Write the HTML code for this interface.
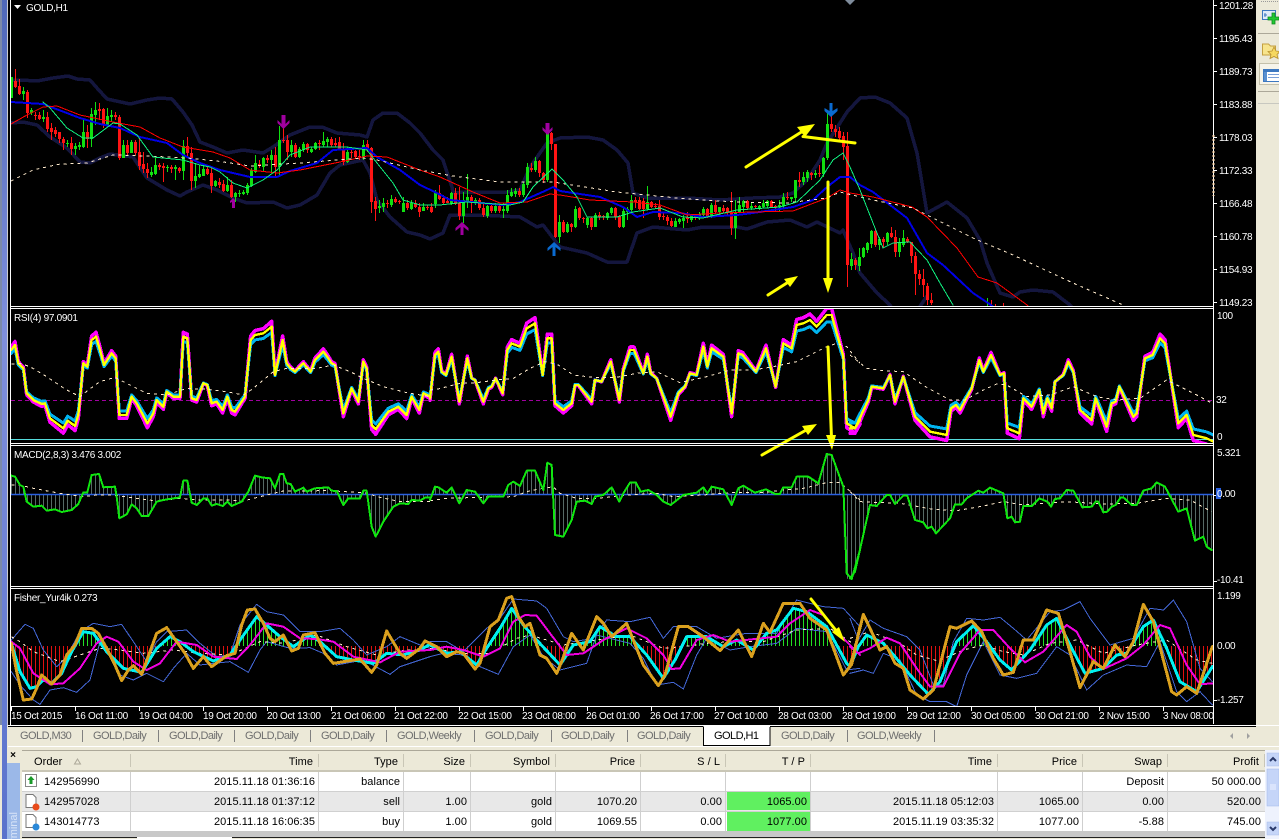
<!DOCTYPE html>
<html><head><meta charset="utf-8"><title>GOLD,H1</title>
<style>
html,body{margin:0;padding:0;background:#ece9d8;width:1279px;height:839px;overflow:hidden}
svg{position:absolute;left:0;top:0;display:block}
.n{vector-effect:non-scaling-stroke;fill:none;stroke-linejoin:round;stroke-linecap:round;shape-rendering:crispEdges}
.c{font-family:"Liberation Sans",sans-serif;font-size:10px;fill:#fff;letter-spacing:-.3px}
.t{font-family:"Liberation Sans",sans-serif;font-size:11px;fill:#000;letter-spacing:.05px}
.g{font-family:"Liberation Sans",sans-serif;font-size:11px;fill:#6e6e6e;letter-spacing:-.55px}
.e{text-anchor:end}
</style></head><body>
<svg width="1279" height="839" viewBox="0 0 1279 839" xmlns="http://www.w3.org/2000/svg">
<defs>
<linearGradient id="ls" x1="0" y1="0" x2="0" y2="1"><stop offset="0" stop-color="#4f68b8"/><stop offset=".4" stop-color="#7f8fdc"/><stop offset="1" stop-color="#5a72cc"/></linearGradient>
<clipPath id="cm"><rect x="11" y="0" width="1202" height="306"/></clipPath>
<clipPath id="cr"><rect x="11" y="309" width="1202" height="134"/></clipPath>
<clipPath id="cd"><rect x="11" y="446" width="1202" height="140"/></clipPath>
<clipPath id="cf"><rect x="11" y="589" width="1202" height="117"/></clipPath>
<clipPath id="cfu"><rect x="11" y="589" width="1202" height="57"/></clipPath>
<clipPath id="cfl"><rect x="11" y="646" width="1202" height="60"/></clipPath>
<pattern id="h0" patternUnits="userSpaceOnUse" width="12" height="1000"><rect x="9" width="3" height="1000" fill="#566a66"/></pattern>
<pattern id="h1" patternUnits="userSpaceOnUse" width="12" height="1000"><rect x="3" width="3" height="1000" fill="#566a66"/></pattern>
<pattern id="g0" patternUnits="userSpaceOnUse" width="12" height="1000"><rect x="9" width="3" height="1000" fill="#22e022"/></pattern>
<pattern id="g1" patternUnits="userSpaceOnUse" width="12" height="1000"><rect x="3" width="3" height="1000" fill="#22e022"/></pattern>
<pattern id="r0" patternUnits="userSpaceOnUse" width="12" height="1000"><rect x="9" width="3" height="1000" fill="#e01010"/></pattern>
<pattern id="r1" patternUnits="userSpaceOnUse" width="12" height="1000"><rect x="3" width="3" height="1000" fill="#e01010"/></pattern>
<g id="rsi">
<polyline class="n" points="34,150 45,135 55,190 70,205 80,280 100,300 125,312 135,310 150,355 190,385 203,362 225,378 235,345 250,190 262,200 275,120 288,110 300,150 312,195 335,160 347,175 358,345 380,345 395,290 410,310 442,370 460,340 470,300 490,320 500,275 520,290 540,290 550,110 562,115 575,295 590,300 610,250 622,255 635,310 650,305 668,330 682,290 695,330 705,335 735,290 752,120 765,105 790,100 815,80 825,225 848,120 860,190 872,205 885,215 910,190 932,215 945,180 970,155 985,175 995,190 1005,195 1030,340 1055,265 1075,305 1090,185 1100,205 1115,375 1127,388 1165,335 1195,320 1220,345 1235,290 1258,330 1270,280 1290,290" transform="translate(0 300) scale(.33333)"/>
<polyline class="n" points="0,295 15,165 25,155 35,215 48,225 65,170 88,305 112,175 125,235 135,240 160,305 175,265 185,260 197,235 218,280 232,150 245,130 270,140 290,85 315,70 338,225 352,115 365,115 375,310 400,330 425,310 435,255 445,255 485,305 495,240 515,245 542,185 568,300 580,210 600,150 612,150 640,220 652,170 662,220 680,235 722,350 745,280 765,260 780,220 800,225 820,140 832,200 845,145 880,170 905,340 925,160 938,165 978,215 1008,145 1037,260 1060,130 1085,145 1100,75 1120,70 1140,60 1160,80 1190,45 1205,45 1240,170 1250,370 1275,385 1290,360" transform="translate(430 300) scale(.33333)"/>
<polyline class="n" points="0,385 15,385 55,300 65,260 100,265 120,225 135,305 160,230 195,350 240,395 290,405 303,325 318,315 330,330 365,265 388,180 400,215 423,165 450,225 462,220 472,385 508,400 520,295 545,320 568,270 580,340 592,295 605,325 615,245 640,225 655,185 670,215 690,330 725,360 737,295 770,380 785,310 797,305 808,260 850,350 860,340 885,175 908,165 930,115 945,130 985,370 1010,345 1030,405 1070,415 1090,425" transform="translate(850 300) scale(.33333)"/>
</g>
<g id="cy0"><polyline points="34,183 34,175 60,260 90,310 110,305 130,285 155,295 185,265 215,200 250,140 280,145 320,200 370,250 425,262 470,190 510,155 540,170 580,200 640,228 690,210 720,165 770,95 800,120 840,155 880,185 930,150 960,170 1010,215 1060,225 1120,235 1160,205 1210,210 1260,195 1290,178 1290,183"/></g>
<g id="cy1"><polyline points="0,183 0,180 50,205 90,200 140,240 170,190 210,130 245,70 280,120 320,165 390,240 430,180 480,170 510,125 560,155 600,155 650,210 700,280 735,225 770,155 830,155 880,185 920,165 970,195 1010,145 1040,135 1090,70 1130,80 1190,125 1250,235 1260,245 1284,183"/></g>
<g id="cy2"><polyline points="25,183 50,150 100,175 135,215 180,270 235,328 270,290 320,170 370,122 410,170 450,225 485,255 540,195 590,120 620,100 660,180 705,265 760,250 800,210 830,205 880,125 910,105 950,190 990,290 1040,320 1087,245 1110,183"/></g>
</defs>

<!-- frame backgrounds -->
<rect x="0" y="0" width="1279" height="839" fill="#ece9d8"/>
<rect x="8" y="0" width="1248" height="725" fill="#000"/>
<rect x="0" y="0" width="2" height="725" fill="#7c8aa8"/>
<rect x="2" y="0" width="5" height="839" fill="url(#ls)"/>
<rect x="7" y="0" width="1" height="725" fill="#ccc"/>

<!-- main pane -->
<g clip-path="url(#cm)">
<g stroke="#14163e" stroke-width="3.5">
<polyline class="n" points="11,80 20,80 37,81 53,78 68,76 77,79 90,80 97,88 107,99 130,104 147,100 160,98 172,99 183,112 192,125 200,142 213,147 227,153 243,150 263,153 273,147 290,135 310,127 322,127 337,133 360,135 367,137 373,120 383,113 397,113 410,123 420,133 433,150 443,160 452,187 453,193 467,192 507,192 520,190 530,167 547,143 560,138 587,137 603,140 617,150 628,163 633,193 647,198 653,198 687,198 720,200 753,198 780,197 793,193 807,180 820,160 827,143 840,123 847,112 860,98 875,97 890,103 907,118 917,153 927,213 947,202 967,218 980,240 987,263 1000,293 1013,297 1020,292 1033,290 1053,292 1070,305 1075,310"/>
<polyline class="n" points="11,123 23,122 37,125 50,137 67,148 80,162 90,163 100,158 110,154 133,157 147,178 167,190 180,196 187,192 203,185 217,190 233,198 247,203 273,202 287,208 300,205 317,195 330,173 340,165 363,160 370,173 377,200 390,217 407,232 420,235 430,239 443,233 450,215 480,215 520,217 537,227 543,225 560,247 587,253 607,262 627,262 637,233 653,227 687,230 703,227 737,227 747,229 767,222 790,220 807,227 817,222 840,233 843,230 853,253 860,273 877,293 890,305 893,310"/>
<polyline class="n" points="919,308 927,296"/>
</g>
<path fill="none" stroke="#10e010" stroke-width="1" shape-rendering="crispEdges" d="M11.5 77V98M23.5 87V100M31.5 108V115M43.5 110V122M67.5 140V147M75.5 143V155M79.5 142V150M83.5 118V148M91.5 108V147M95.5 102V125M107.5 108V127M111.5 110V122M123.5 140V158M131.5 140V153M151.5 167V177M155.5 158V175M167.5 165V172M175.5 165V180M183.5 140V180M195.5 163V188M199.5 165V178M203.5 165V175M215.5 180V187M227.5 177V192M235.5 192V202M239.5 190V197M243.5 190V195M247.5 183V195M251.5 168V187M255.5 155V173M263.5 157V172M271.5 150V172M279.5 126V175M291.5 140V157M299.5 147V158M303.5 142V152M311.5 147V153M315.5 142V150M323.5 132V147M327.5 137V147M347.5 147V163M363.5 140V160M379.5 200V213M383.5 198V212M391.5 195V207M403.5 197V212M411.5 200V210M423.5 203V211M435.5 190V208M451.5 192V205M463.5 192V223M467.5 174V208M475.5 198V205M487.5 205V218M495.5 203V213M503.5 203V218M507.5 190V213M511.5 188V197M515.5 188V197M523.5 182V197M527.5 163V188M535.5 157V172M547.5 130V182M559.5 215V243M567.5 222V233M575.5 206V228M587.5 217V228M595.5 213V227M607.5 212V220M611.5 207V215M623.5 208V228M627.5 207V220M631.5 195V213M647.5 186V210M675.5 218V227M679.5 218V224M683.5 215V228M691.5 215V222M699.5 212V220M703.5 207V217M711.5 203V218M719.5 207V215M735.5 200V239M739.5 197V213M743.5 200V212M751.5 203V210M759.5 205V210M763.5 200V208M767.5 200V208M779.5 200V212M783.5 193V208M791.5 197V202M795.5 180V202M803.5 172V185M807.5 170V182M815.5 170V178M823.5 157V177M827.5 112V160M851.5 253V270M859.5 248V271M863.5 247V258M867.5 242V253M871.5 230V248M879.5 237V250M887.5 232V245M899.5 238V257M903.5 230V247M987.5 298V306"/>
<path fill="none" stroke="#10e010" stroke-width="3" shape-rendering="crispEdges" d="M11.5 77V98M23.5 91V94M31.5 110V113M43.5 117V119M67.5 143V144M75.5 146V149M79.5 145V147M83.5 132V147M91.5 114V139M95.5 110V115M107.5 116V125M111.5 115V117M123.5 145V158M131.5 142V153M151.5 172V175M155.5 165V174M167.5 167V168M175.5 167V169M183.5 146V171M195.5 176V181M199.5 174V177M203.5 169V176M215.5 181V186M227.5 185V191M235.5 193V197M239.5 193V194M243.5 192V194M247.5 185V193M251.5 170V186M255.5 163V172M263.5 158V167M271.5 155V160M279.5 140V167M291.5 145V152M299.5 149V157M303.5 144V150M311.5 149V152M315.5 143V149M323.5 141V145M327.5 139V142M347.5 152V162M363.5 145V157M379.5 206V208M383.5 203V207M391.5 199V205M403.5 203V212M411.5 203V209M423.5 207V211M435.5 193V204M451.5 193V204M463.5 200V216M467.5 197V202M475.5 200V202M487.5 206V216M495.5 206V211M503.5 209V211M507.5 195V211M511.5 192V196M515.5 191V194M523.5 184V195M527.5 167V185M535.5 161V170M547.5 133V180M559.5 222V237M567.5 224V232M575.5 209V227M587.5 218V225M595.5 215V227M607.5 213V218M611.5 208V213M623.5 211V227M627.5 209V212M631.5 200V210M647.5 202V209M675.5 221V227M679.5 219V222M683.5 218V221M691.5 216V220M699.5 214V218M703.5 209V215M711.5 205V217M719.5 207V212M735.5 212V228M739.5 205V212M743.5 201V207M751.5 206V208M759.5 206V209M763.5 203V207M767.5 201V206M779.5 205V207M783.5 197V206M791.5 197V199M795.5 180V198M803.5 177V182M807.5 172V178M815.5 173V175M823.5 158V174M827.5 124V158M851.5 259V266M859.5 257V266M863.5 248V257M867.5 243V250M871.5 231V244M879.5 239V245M887.5 233V242M899.5 243V252M903.5 238V245"/>
<path fill="none" stroke="#ff1414" stroke-width="1" shape-rendering="crispEdges" d="M15.5 69V88M19.5 79V95M27.5 90V118M35.5 112V120M39.5 112V120M47.5 112V132M51.5 123V140M55.5 127V137M59.5 132V143M63.5 137V150M71.5 137V155M87.5 125V148M99.5 103V120M103.5 108V128M115.5 112V120M119.5 115V160M127.5 140V155M135.5 140V155M139.5 137V170M143.5 152V173M147.5 163V178M159.5 163V170M163.5 163V182M171.5 165V173M179.5 167V173M187.5 137V157M191.5 147V190M207.5 165V175M211.5 168V193M219.5 178V188M223.5 180V192M231.5 180V198M259.5 160V168M267.5 155V163M275.5 147V177M283.5 127V143M287.5 135V160M295.5 143V158M307.5 143V153M319.5 140V150M331.5 137V147M335.5 138V147M339.5 137V150M343.5 143V165M351.5 147V158M355.5 150V158M359.5 150V160M367.5 140V152M371.5 147V213M375.5 197V221M387.5 200V208M395.5 197V203M399.5 200V204M407.5 200V210M415.5 200V208M419.5 203V217M427.5 205V210M431.5 203V213M439.5 185V200M443.5 195V205M447.5 197V203M455.5 188V205M459.5 187V220M471.5 195V213M479.5 198V210M483.5 202V217M491.5 203V213M499.5 205V213M519.5 188V197M531.5 163V172M539.5 160V177M543.5 172V183M551.5 132V150M555.5 144V238M563.5 220V233M571.5 223V232M579.5 207V220M583.5 217V223M591.5 217V230M599.5 212V220M603.5 215V220M615.5 207V220M619.5 215V228M635.5 197V208M639.5 197V210M643.5 198V218M651.5 201V208M655.5 203V208M659.5 200V220M663.5 213V220M667.5 215V225M671.5 218V227M687.5 212V223M695.5 215V220M707.5 208V218M715.5 200V213M723.5 205V213M727.5 207V215M731.5 192V235M747.5 200V210M755.5 205V208M771.5 200V208M775.5 205V212M787.5 192V200M799.5 172V187M811.5 172V180M819.5 165V177M831.5 116V132M835.5 125V137M839.5 127V140M843.5 132V160M847.5 132V287M855.5 258V270M875.5 230V247M883.5 237V248M891.5 227V238M895.5 230V257M907.5 237V243M911.5 242V263M915.5 252V295M919.5 270V285M923.5 269V297M927.5 283V305M931.5 293V305M991.5 300V306M995.5 304V306M1003.5 303V306"/>
<path fill="none" stroke="#ff1414" stroke-width="3" shape-rendering="crispEdges" d="M15.5 81V87M19.5 86V94M27.5 92V113M35.5 115V116M39.5 115V119M47.5 117V129M51.5 128V132M55.5 130V134M59.5 132V139M63.5 139V143M71.5 143V149M87.5 132V139M99.5 109V111M103.5 109V125M115.5 115V117M119.5 117V158M127.5 145V153M135.5 142V153M139.5 152V166M143.5 164V169M147.5 169V173M159.5 165V167M163.5 166V168M171.5 167V169M179.5 168V171M187.5 146V153M191.5 153V181M207.5 169V174M211.5 173V186M219.5 182V185M223.5 184V191M231.5 185V197M259.5 164V166M267.5 158V160M275.5 155V167M283.5 140V141M287.5 140V152M295.5 145V157M307.5 144V150M319.5 143V144M331.5 139V145M335.5 143V145M339.5 142V150M343.5 149V162M351.5 152V153M355.5 151V157M359.5 156V157M367.5 144V150M371.5 148V202M375.5 201V209M387.5 203V204M395.5 199V202M399.5 201V202M407.5 203V208M415.5 203V207M419.5 207V212M427.5 207V208M431.5 207V212M439.5 193V199M443.5 198V203M447.5 201V203M455.5 193V204M459.5 203V216M471.5 197V203M479.5 200V208M483.5 208V215M491.5 206V211M499.5 206V211M519.5 191V195M531.5 168V170M539.5 161V173M543.5 173V180M551.5 133V144M555.5 144V237M563.5 222V232M571.5 224V227M579.5 208V218M583.5 218V219M591.5 218V227M599.5 215V217M603.5 216V217M615.5 208V217M619.5 216V227M635.5 200V202M639.5 200V209M643.5 201V209M651.5 202V207M655.5 206V207M659.5 206V217M663.5 216V217M667.5 217V221M671.5 221V226M687.5 217V219M695.5 216V217M707.5 209V217M715.5 205V212M723.5 208V211M727.5 208V213M731.5 212V228M747.5 201V208M755.5 206V207M771.5 201V207M775.5 206V207M787.5 197V198M799.5 180V182M811.5 173V175M819.5 173V174M831.5 124V129M835.5 129V132M839.5 131V138M843.5 136V147M847.5 146V265M855.5 260V265M875.5 231V245M883.5 239V242M891.5 233V237M895.5 237V252M907.5 239V242M911.5 242V256M915.5 256V274M919.5 274V279M923.5 279V285M927.5 286V300M931.5 300V303"/>
<polyline class="n" stroke="#0000e6" stroke-width="2" points="11,102 43,104 80,118 100,124 120,128 140,137 167,143 183,155 200,163 220,170 250,177 277,177 290,171 317,163 333,150 367,148 377,157 400,170 420,185 437,193 450,200 503,205 520,202 547,190 553,187 560,191 600,197 623,207 637,217 653,212 680,213 703,217 737,215 753,213 793,207 813,200 827,187 840,177 850,177 860,185 873,192 907,218 927,253 943,265 973,293 988,303 995,308"/>
<polyline class="n" stroke="#ff0000" stroke-width="1" points="11,124 27,115 43,107 57,106 80,115 113,122 140,127 160,138 183,147 213,152 230,158 250,170 277,173 300,170 340,162 367,156 387,157 420,170 440,177 473,192 500,203 527,202 550,194 560,195 590,200 633,202 660,205 687,215 720,213 753,212 793,211 827,198 840,190 850,193 873,197 912,207 927,217 957,248 978,277 997,283 1027,305 1030,308"/>
<polyline class="n" stroke="#ffebcd" stroke-width="1" stroke-dasharray="3 4" style="stroke-linecap:butt" points="11,181 33,170 60,164 87,163 113,155 147,156 187,158 217,161 250,166 300,163 363,158 377,160 420,170 453,176 500,182 553,182 617,192 687,199 737,202 787,203 827,198 840,192 873,200 913,208 973,238 1013,255 1073,283 1123,305"/>
<polyline class="n" stroke="#10f080" stroke-width="1" points="43,102 50,108 67,128 83,138 93,138 113,123 120,124 137,135 153,157 183,160 200,165 210,167 220,172 233,183 247,188 263,180 277,170 290,155 310,147 347,147 367,150 377,163 393,183 403,200 420,205 440,205 467,202 510,205 523,202 533,187 552,169 563,180 577,197 587,217 617,217 633,212 660,208 683,217 703,218 737,210 780,207 797,202 820,180 833,160 843,153 850,167 860,190 873,223 883,248 893,243 910,242 927,260 940,283 953,305"/>
<!-- coloured signal arrows -->
<g fill="#a000a0">
<path d="M281.5 115h4v9l4-4v3l-6 6-6-6v-3l4 4z"/>
<path d="M545.5 123h4v7l3-3v3l-5 5-5-5v-3l3 3z"/>
<path d="M232 208h3v-8l-2-2-3 3v2l2-1z"/>
<path d="M460.5 235h3v-8l5 4v-3l-6.500-6-6.500 6v3l5-4z"/>
</g>
<g fill="#0a6ad0">
<path d="M552.500 256h3v-9l5 4v-3l-6.500-6-6.500 6v3l5-4z"/>
<path d="M829.500 103h3v8l5-3v3l-6.500 6-6.500-6v-3l5 3z"/>
</g>
</g>
<polygon points="845,0 855,0 850,5" fill="#7f8c9c"/>
<polygon points="14,5 21,5 17.500,9" fill="#fff"/>
<text x="26" y="11" class="c">GOLD,H1</text>

<!-- RSI -->
<g clip-path="url(#cr)">
<line x1="11" y1="400.500" x2="1213" y2="400.500" stroke="#a000a0" stroke-dasharray="4 3"/>
<line x1="11" y1="439.500" x2="1213" y2="439.500" stroke="#55dcdc"/>
<use href="#rsi" fill="none" stroke="#ff00ff" stroke-width="3.5" transform="translate(0 380) scale(1 1.1) translate(0 -380)"/>
<use href="#rsi" fill="none" stroke="#00b4f0" stroke-width="3" transform="translate(0 380) scale(1 .89) translate(0 -380)"/>
<use href="#rsi" fill="none" stroke="#ffff00" stroke-width="2.4"/>
<g fill="none" stroke="#ffebcd" stroke-dasharray="3 4">
<polyline class="n" style="stroke-linecap:butt" transform="translate(0 300) scale(.33333)" points="34,192 60,190 90,200 140,230 200,270 240,290 265,270 300,245 345,232 380,250 440,280 500,285 560,265 620,268 680,275 730,285 760,265 820,215 860,205 950,205 1000,195 1050,215 1090,235 1150,260 1220,278 1290,290"/>
<polyline class="n" style="stroke-linecap:butt" transform="translate(430 300) scale(.33333)" points="0,270 20,268 90,250 140,248 200,240 250,235 300,205 345,185 385,195 430,225 490,232 560,232 620,220 680,215 750,248 830,230 900,210 970,210 1030,200 1100,185 1190,140 1220,130 1250,140 1290,190"/>
<polyline class="n" style="stroke-linecap:butt" transform="translate(850 300) scale(.33333)" points="0,165 50,205 100,212 160,215 230,262 300,300 345,300 400,270 440,252 470,255 530,290 600,285 670,260 740,290 800,300 870,295 950,240 1000,265 1050,290 1090,312"/>
</g>
</g>
<text x="14" y="321" class="c">RSI(4) 97.0901</text>

<!-- MACD -->
<g clip-path="url(#cd)">
<g stroke="none">
<polygon fill="url(#h0)" transform="translate(0 300) scale(.33333)" points="0,583 34,527 45,530 60,555 70,560 80,605 100,620 125,617 140,632 165,628 185,636 215,630 235,612 250,577 262,577 275,525 297,522 310,562 345,560 350,590 358,655 380,643 395,613 410,625 425,648 445,648 470,605 490,600 540,592 550,542 562,542 575,608 590,615 610,595 622,595 635,617 650,612 668,618 682,605 695,618 725,605 745,575 765,527 785,532 810,535 825,565 840,522 850,522 860,550 872,552 885,575 910,563 920,575 945,565 985,562 995,572 1010,573 1030,615 1045,595 1080,595 1090,572 1100,572 1115,680 1127,710 1150,665 1180,620 1200,610 1225,612 1235,600 1260,602 1275,593 1290,593 1290,583"/>
<polygon fill="url(#h1)" transform="translate(430 300) scale(.33333)" points="0,583 0,600 15,560 25,562 50,578 65,562 88,610 110,570 135,575 160,610 175,590 220,590 235,555 250,545 270,558 290,512 315,512 340,570 352,488 365,495 375,705 400,710 425,660 440,605 465,602 485,612 495,590 520,585 545,562 568,605 580,580 600,548 618,548 632,575 655,570 680,585 700,605 722,615 760,585 800,578 820,562 832,580 845,560 880,568 905,615 925,565 940,557 975,578 1008,568 1035,582 1050,582 1060,562 1085,562 1100,530 1135,530 1165,550 1190,462 1205,465 1240,560 1243,583"/>
<polygon fill="url(#h1)" transform="translate(850 300) scale(.33333)" points="-22,583 -20,590 -17,820 -12,837 0,835 15,815 60,615 80,618 110,585 120,585 135,612 160,587 172,587 195,660 220,667 232,685 245,680 258,700 300,655 315,613 335,613 350,595 385,572 400,578 420,563 460,580 472,655 485,650 495,667 510,665 520,618 545,618 568,595 592,605 603,620 615,597 630,595 650,570 670,572 697,622 725,620 737,605 745,605 760,637 772,635 785,620 797,615 812,592 820,592 845,615 860,615 880,572 905,565 920,547 945,560 985,635 1010,625 1035,722 1060,710 1070,740 1085,750 1110,583"/>
</g>
<line x1="11" y1="494.500" x2="1213" y2="494.500" stroke="#2a60e0" stroke-width="1.500"/>
<g fill="none" stroke="#ffebcd" stroke-dasharray="3 4">
<polyline class="n" style="stroke-linecap:butt" transform="translate(0 300) scale(.33333)" points="34,555 60,555 100,565 180,580 250,590 290,585 340,585 410,595 470,603 540,595 600,600 680,600 730,603 800,585 850,573 990,572 1080,578 1105,580 1130,590 1200,605 1290,605"/>
<polyline class="n" style="stroke-linecap:butt" transform="translate(430 300) scale(.33333)" points="0,602 50,595 150,592 250,590 300,572 370,560 390,580 440,595 500,595 600,585 680,580 730,590 820,585 900,578 1000,578 1060,570 1120,565 1190,548 1230,547 1290,600"/>
<polyline class="n" style="stroke-linecap:butt" transform="translate(850 300) scale(.33333)" points="0,575 30,605 150,610 250,628 320,632 400,618 460,605 520,615 650,605 760,612 860,610 950,595 1020,600 1085,635"/>
</g>
<g fill="none" stroke="#0fe60f" stroke-width="2">
<polyline class="n" transform="translate(0 300) scale(.33333)" points="34,527 45,530 60,555 70,560 80,605 100,620 125,617 140,632 165,628 185,636 215,630 235,612 250,577 262,577 275,525 297,522 310,562 345,560 350,590 358,655 380,643 395,613 410,625 425,648 445,648 470,605 490,600 540,592 550,542 562,542 575,608 590,615 610,595 622,595 635,617 650,612 668,618 682,605 695,618 725,605 745,575 765,527 785,532 810,535 825,565 840,522 850,522 860,550 872,552 885,575 910,563 920,575 945,565 985,562 995,572 1010,573 1030,615 1045,595 1080,595 1090,572 1100,572 1115,680 1127,710 1150,665 1180,620 1200,610 1225,612 1235,600 1260,602 1275,593 1290,593"/>
<polyline class="n" transform="translate(430 300) scale(.33333)" points="0,600 15,560 25,562 50,578 65,562 88,610 110,570 135,575 160,610 175,590 220,590 235,555 250,545 270,558 290,512 315,512 340,570 352,488 365,495 375,705 400,710 425,660 440,605 465,602 485,612 495,590 520,585 545,562 568,605 580,580 600,548 618,548 632,575 655,570 680,585 700,605 722,615 760,585 800,578 820,562 832,580 845,560 880,568 905,615 925,565 940,557 975,578 1008,568 1035,582 1050,582 1060,562 1085,562 1100,530 1135,530 1165,550 1190,462 1205,465 1240,560 1250,820 1265,837 1290,750"/>
<polyline class="n" transform="translate(850 300) scale(.33333)" points="0,835 15,815 60,615 80,618 110,585 120,585 135,612 160,587 172,587 195,660 220,667 232,685 245,680 258,700 300,655 315,613 335,613 350,595 385,572 400,578 420,563 460,580 472,655 485,650 495,667 510,665 520,618 545,618 568,595 592,605 603,620 615,597 630,595 650,570 670,572 697,622 725,620 737,605 745,605 760,637 772,635 785,620 797,615 812,592 820,592 845,615 860,615 880,572 905,565 920,547 945,560 985,635 1010,625 1035,722 1060,710 1070,740 1085,750"/>
</g>
</g>
<text x="14" y="458" class="c">MACD(2,8,3) 3.476 3.002</text>

<!-- Fisher -->
<g clip-path="url(#cfu)" stroke="none" shape-rendering="crispEdges">
<use href="#cy0" fill="url(#g0)" transform="translate(0 585) scale(.33333)"/>
<use href="#cy1" fill="url(#g1)" transform="translate(430 585) scale(.33333)"/>
<use href="#cy2" fill="url(#g1)" transform="translate(850 585) scale(.33333)"/>
</g>
<g clip-path="url(#cfl)" stroke="none" shape-rendering="crispEdges">
<use href="#cy0" fill="url(#r0)" transform="translate(0 585) scale(.33333)"/>
<use href="#cy1" fill="url(#r1)" transform="translate(430 585) scale(.33333)"/>
<use href="#cy2" fill="url(#r1)" transform="translate(850 585) scale(.33333)"/>
</g>
<g clip-path="url(#cf)">
<g fill="none" stroke="#4468d8" stroke-width="1">
<polyline class="n" transform="translate(0 585) scale(.33333)" points="34,165 75,118 100,130 130,195 170,245 200,215 240,140 280,115 330,125 365,118 400,170 440,230 470,170 500,140 560,135 600,175 650,215 690,210 720,120 770,58 800,80 850,90 900,140 960,140 1020,130 1060,165 1100,210 1160,185 1200,155 1260,180 1290,190"/>
<polyline class="n" transform="translate(430 585) scale(.33333)" points="0,170 50,170 100,200 170,130 210,100 250,42 320,48 350,70 400,155 430,170 490,160 530,105 600,110 660,97 700,160 730,125 800,125 860,160 950,145 1040,145 1100,45 1180,65 1240,70 1290,125"/>
<polyline class="n" transform="translate(850 585) scale(.33333)" points="0,100 25,165 60,105 100,130 170,155 210,195 250,300 280,300 310,170 350,100 400,105 450,97 490,130 530,165 600,80 640,75 690,50 720,100 780,180 850,160 900,70 940,75 970,45 1010,110 1050,250 1087,290"/>
<polyline class="n" transform="translate(0 585) scale(.33333)" points="34,260 60,300 100,345 120,358 150,315 190,308 230,322 270,285 300,170 320,195 360,270 400,285 440,265 490,290 520,250 560,205 600,240 690,230 745,262 780,195 800,170 870,190 930,188 970,205 1010,240 1090,225 1170,268 1200,245 1290,215"/>
<polyline class="n" transform="translate(430 585) scale(.33333)" points="0,215 40,205 100,210 150,245 205,268 250,185 300,150 340,215 390,255 470,235 500,150 560,165 600,175 640,220 680,300 730,292 760,312 800,210 830,160 900,195 960,185 1040,175 1100,130 1190,140 1250,255 1290,250"/>
<polyline class="n" transform="translate(850 585) scale(.33333)" points="0,265 40,255 70,265 100,205 150,225 200,330 240,350 290,350 320,365 350,270 400,170 450,270 500,280 560,265 620,185 660,210 710,315 760,270 830,240 890,245 930,170 980,320 1010,350 1050,320 1087,360"/>
</g>
<g fill="none" stroke="#ffebcd" stroke-dasharray="3 4">
<polyline class="n" style="stroke-linecap:butt" transform="translate(0 585) scale(.33333)" points="34,155 60,170 100,200 180,230 240,210 300,190 360,195 430,205 520,195 600,205 690,210 780,170 850,175 950,150 1040,185 1130,210 1220,195 1290,195"/>
<polyline class="n" style="stroke-linecap:butt" transform="translate(430 585) scale(.33333)" points="0,190 100,205 180,205 260,160 300,150 400,180 500,165 600,150 700,190 760,185 830,175 900,170 1000,170 1100,135 1200,130 1290,190"/>
<polyline class="n" style="stroke-linecap:butt" transform="translate(850 585) scale(.33333)" points="0,160 60,140 150,175 200,210 265,228 340,195 400,180 460,200 520,210 600,175 680,165 760,205 860,180 950,165 1040,225 1087,235"/>
</g>
<g fill="none" stroke="#00f0f0" stroke-width="3">
<polyline class="n" transform="translate(0 585) scale(.33333)" points="34,175 60,260 90,310 110,305 130,285 155,295 185,265 215,200 250,140 280,145 320,200 370,250 425,262 470,190 510,155 540,170 580,200 640,228 690,210 720,165 770,95 800,120 840,155 880,185 930,150 960,170 1010,215 1060,225 1120,235 1160,205 1210,210 1260,195 1290,178"/>
<polyline class="n" transform="translate(430 585) scale(.33333)" points="0,180 50,205 90,200 140,240 170,190 210,130 245,70 280,120 320,165 390,240 430,180 480,170 510,125 560,155 600,155 650,210 700,280 735,225 770,155 830,155 880,185 920,165 970,195 1010,145 1040,135 1090,70 1130,80 1190,125 1250,235 1260,245"/>
<polyline class="n" transform="translate(850 585) scale(.33333)" points="0,245 25,185 50,150 100,175 135,215 180,270 235,328 270,290 320,170 370,122 410,170 450,225 485,255 540,195 590,120 620,100 660,180 705,265 760,250 800,210 830,205 880,125 910,105 950,190 990,290 1040,320 1087,245"/>
</g>
<g fill="none" stroke="#f000e0" stroke-width="2">
<polyline class="n" transform="translate(0 585) scale(.33333)" points="34,170 60,190 100,265 150,298 190,295 240,250 290,175 320,155 355,170 400,230 440,255 480,235 530,170 590,180 640,215 710,222 750,180 800,115 850,125 900,160 950,162 1000,170 1060,215 1140,232 1200,200 1290,195"/>
<polyline class="n" transform="translate(430 585) scale(.33333)" points="0,195 50,185 100,195 160,215 210,190 250,110 285,90 320,92 360,145 410,210 460,205 520,165 590,130 650,160 700,210 725,252 750,250 800,165 850,150 900,170 1040,155 1080,115 1140,75 1180,90 1230,150 1290,210"/>
<polyline class="n" transform="translate(850 585) scale(.33333)" points="0,185 25,205 60,190 110,158 150,175 200,250 240,305 280,305 330,205 390,135 430,135 480,190 525,232 580,200 650,120 680,140 720,215 760,252 830,220 880,180 930,120 960,130 1010,240 1050,298 1087,295"/>
</g>
<g fill="none" stroke="#daa01e" stroke-width="3">
<polyline class="n" transform="translate(0 585) scale(.33333)" points="34,175 50,260 70,345 95,342 110,310 125,270 155,297 180,270 200,210 225,180 245,130 275,130 295,145 320,190 345,240 365,287 385,255 400,242 425,268 450,200 470,145 500,128 530,170 555,205 580,250 610,215 635,245 680,212 705,205 725,120 742,75 765,72 790,115 810,160 825,170 850,150 875,198 895,190 910,150 945,143 975,205 1000,235 1080,222 1115,262 1130,240 1160,138 1200,205 1220,220 1260,190 1275,168 1290,175"/>
<polyline class="n" transform="translate(430 585) scale(.33333)" points="0,175 20,185 50,215 80,200 100,205 135,252 150,235 180,125 205,105 230,40 245,35 265,95 285,125 300,115 330,210 350,220 380,265 395,230 425,145 460,195 500,95 520,115 545,155 590,115 640,240 685,302 705,270 745,125 775,125 820,155 870,197 925,135 965,215 1000,115 1020,142 1060,55 1110,55 1140,100 1190,135 1240,270 1265,238 1290,125"/>
<polyline class="n" transform="translate(850 585) scale(.33333)" points="0,240 10,210 40,88 60,130 90,195 110,185 135,235 160,250 180,315 220,342 250,315 300,125 320,130 365,108 395,140 430,220 460,270 490,262 520,165 550,165 590,75 625,85 660,200 690,308 730,230 760,250 795,180 825,215 850,170 880,58 910,110 965,320 980,330 1010,305 1040,325 1087,185"/>
</g>
</g>
<text x="14" y="601" class="c">Fisher_Yur4ik 0.273</text>

<!-- yellow hand-drawn arrows -->
<g stroke="#ffff00" stroke-width="3" stroke-linecap="round" fill="#ffff00">
<line x1="746" y1="167" x2="803" y2="131"/>
<polygon stroke="none" points="815,124 797,127 805,137"/>
<line x1="803" y1="136.500" x2="855" y2="143" stroke-width="3"/>
<line x1="828" y1="182" x2="828" y2="280"/>
<polygon stroke="none" points="828,293 823,278 833,278"/>
<line x1="768" y1="295" x2="790" y2="281"/>
<polygon stroke="none" points="798,276 784,279 790,287"/>
<line x1="762" y1="455" x2="808" y2="429"/>
<polygon stroke="none" points="817,424 802,426 808,435"/>
<line x1="828" y1="347" x2="831.500" y2="438"/>
<polygon stroke="none" points="832,450 826,435 836,435"/>
<line x1="811" y1="599" x2="838" y2="633"/>
<polygon stroke="none" points="845,642 832,632 839,627"/>
</g>

<!-- pane dividers -->
<g fill="#fff">
<rect x="10" y="0" width="1" height="725"/>
<rect x="1213" y="0" width="1" height="724"/>
<rect x="10" y="306" width="1204" height="1"/>
<rect x="10" y="308" width="1204" height="1"/>
<rect x="10" y="443" width="1204" height="1"/>
<rect x="10" y="445" width="1204" height="1"/>
<rect x="10" y="586" width="1204" height="1"/>
<rect x="10" y="588" width="1204" height="1"/>
<rect x="10" y="706" width="1204" height="1"/>
</g>
<line x1="1213.500" y1="135" x2="1213.500" y2="196" stroke="#ffdcb4" stroke-width="2" stroke-dasharray="2 2"/>

<!-- price axis -->
<path stroke="#fff" stroke-width="1" fill="none" d="M1214 5.500h3M1214 38.500h3M1214 71.500h3M1214 104.500h3M1214 137.500h3M1214 170.500h3M1214 203.500h3M1214 236.500h3M1214 269.500h3M1214 302.500h3M1214 495.500h2M1214 581.500h3M1214 700.500h3"/>
<g class="c">
<text class="c" x="1219" y="9">1201.28</text><text class="c" x="1219" y="42">1195.43</text><text class="c" x="1219" y="75">1189.73</text><text class="c" x="1219" y="108">1183.88</text><text class="c" x="1219" y="141">1178.03</text><text class="c" x="1219" y="174">1172.33</text><text class="c" x="1219" y="207">1166.48</text><text class="c" x="1219" y="240">1160.78</text><text class="c" x="1219" y="273">1154.93</text><text class="c" x="1219" y="306">1149.23</text>
<text class="c" x="1217" y="319">100</text><text class="c" x="1216" y="403">32</text><text class="c" x="1217" y="440">0</text>
<text class="c" x="1217" y="456">5.321</text>
<rect x="1216" y="488" width="5" height="11" fill="#2a60e0"/>
<text class="c" x="1217" y="497">0.00</text>
<text class="c" x="1217" y="583">-10.41</text>
<text class="c" x="1217" y="599">1.199</text><text class="c" x="1217" y="649">0.00</text><text class="c" x="1217" y="703">-1.257</text>
</g>

<!-- time axis -->
<path stroke="#fff" fill="none" d="M11.500 707v4M75.500 707v4M139.500 707v4M203.500 707v4M267.500 707v4M331.500 707v4M395.500 707v4M459.500 707v4M523.500 707v4M587.500 707v4M651.500 707v4M715.500 707v4M779.500 707v4M843.500 707v4M907.500 707v4M971.500 707v4M1035.500 707v4M1099.500 707v4M1163.500 707v4"/>
<text class="c" x="11" y="719">15 Oct 2015</text><text class="c" x="75" y="719">16 Oct 11:00</text><text class="c" x="139" y="719">19 Oct 04:00</text><text class="c" x="203" y="719">19 Oct 20:00</text><text class="c" x="267" y="719">20 Oct 13:00</text><text class="c" x="331" y="719">21 Oct 06:00</text><text class="c" x="394" y="719">21 Oct 22:00</text><text class="c" x="458" y="719">22 Oct 15:00</text><text class="c" x="522" y="719">23 Oct 08:00</text><text class="c" x="586" y="719">26 Oct 01:00</text><text class="c" x="650" y="719">26 Oct 17:00</text><text class="c" x="714" y="719">27 Oct 10:00</text><text class="c" x="778" y="719">28 Oct 03:00</text><text class="c" x="842" y="719">28 Oct 19:00</text><text class="c" x="907" y="719">29 Oct 12:00</text><text class="c" x="971" y="719">30 Oct 05:00</text><text class="c" x="1035" y="719">30 Oct 21:00</text><text class="c" x="1099" y="719">2 Nov 15:00</text><text class="c" x="1163" y="719">3 Nov 08:00</text>

<!-- right toolbar -->
<rect x="1256" y="0" width="23" height="746" fill="#ece9d8"/>
<path d="M1261 1.500h18" stroke="#999" stroke-dasharray="1 1"/>
<rect x="1262.500" y="10.500" width="13" height="9" fill="#dfeaf8" stroke="#3d78c0"/>
<path d="M1265 13v4M1267 15h-3" stroke="#3d78c0" fill="none"/>
<path d="M1272 13h3v4h4v3h-4v4h-3v-4h-4v-3h4z" fill="#22c832" stroke="#0c8a1c" stroke-width=".8"/>
<rect x="1258" y="33" width="21" height="1" fill="#aca899"/>
<path d="M1262.500 44h6l2 2h5v9h-13z" fill="#f7e48c" stroke="#c4a040"/>
<path d="M1274 47l2 4 4 .5-3 3 1 4-4-2-4 2 1-4-3-3 4-.5z" fill="#f6d860" stroke="#b89030" stroke-width=".8"/>
<rect x="1259.500" y="63.500" width="22" height="21" fill="#f6f4ea" stroke="#c4c0aa"/>
<rect x="1263.500" y="69.500" width="16" height="12" fill="#fff" stroke="#3d78c0"/>
<rect x="1264" y="70" width="15" height="2" fill="#3d78c0"/>
<rect x="1264" y="72" width="3" height="9" fill="#5a90d0"/>
<path d="M1268 74.500h11M1268 77.500h11" stroke="#7ba0d8"/>
<rect x="1258" y="91" width="21" height="1" fill="#aca899"/>
<rect x="1258" y="103" width="21" height="1" fill="#c8c8c0"/>

<!-- tabs -->
<rect x="8" y="725" width="1271" height="1" fill="#fff"/>
<rect x="8" y="726" width="1248" height="1" fill="#000"/>
<rect x="8" y="727" width="1271" height="19" fill="#ece9d8"/>
<rect x="8" y="746" width="1271" height="1" fill="#fff"/>
<rect x="703" y="726" width="67" height="19" fill="#fff"/>
<path d="M703.500 726.500V745M770 727v18.500H703" stroke="#000" fill="none"/>
<g fill="#808080">
<rect x="82" y="730" width="1" height="12"/><rect x="158" y="730" width="1" height="12"/><rect x="234" y="730" width="1" height="12"/><rect x="310" y="730" width="1" height="12"/><rect x="386" y="730" width="1" height="12"/><rect x="474" y="730" width="1" height="12"/><rect x="551" y="730" width="1" height="12"/><rect x="627" y="730" width="1" height="12"/><rect x="847" y="730" width="1" height="12"/><rect x="934" y="730" width="1" height="12"/>
</g>
<text class="g" x="20" y="739">GOLD,M30</text><text class="g" x="93" y="739">GOLD,Daily</text><text class="g" x="169" y="739">GOLD,Daily</text><text class="g" x="245" y="739">GOLD,Daily</text><text class="g" x="321" y="739">GOLD,Daily</text><text class="g" x="397" y="739">GOLD,Weekly</text><text class="g" x="485" y="739">GOLD,Daily</text><text class="g" x="561" y="739">GOLD,Daily</text><text class="g" x="637" y="739">GOLD,Daily</text>
<text class="g" style="fill:#000" x="714" y="739">GOLD,H1</text>
<text class="g" x="781" y="739">GOLD,Daily</text><text class="g" x="857" y="739">GOLD,Weekly</text>
<path d="M1233 733v6l-3-3zM1247 733v6l3-3z" fill="#a0a0a0"/>

<!-- terminal side -->
<rect x="7" y="747" width="15" height="92" fill="#ece9d8"/>
<rect x="7" y="763" width="13" height="76" fill="#9bb8e8"/>
<text x="13" y="758" style="font:bold 10px 'Liberation Sans',sans-serif;fill:#000" text-anchor="middle">×</text>
<text transform="translate(17 812) rotate(-90)" style="font:11px 'Liberation Sans',sans-serif;fill:#d8e4f8" text-anchor="end">Terminal</text>

<!-- table header -->
<rect x="22" y="750" width="1243" height="1" fill="#aca899"/>
<rect x="22" y="751" width="1243" height="19" fill="#ece9d8"/>
<rect x="22" y="770" width="1243" height="2" fill="#c9c6b6"/>
<g fill="#c9c6b6">
<rect x="130" y="754" width="1" height="13"/><rect x="318" y="754" width="1" height="13"/><rect x="403" y="754" width="1" height="13"/><rect x="470" y="754" width="1" height="13"/><rect x="555" y="754" width="1" height="13"/><rect x="640" y="754" width="1" height="13"/><rect x="725" y="754" width="1" height="13"/><rect x="810" y="754" width="1" height="13"/><rect x="997" y="754" width="1" height="13"/><rect x="1082" y="754" width="1" height="13"/><rect x="1167" y="754" width="1" height="13"/><rect x="1264" y="754" width="1" height="13"/>
</g>
<text class="t" x="34" y="765">Order</text>
<path d="M77.500 759l3 5h-6z" fill="none" stroke="#aca899"/>
<text class="t e" x="313" y="765">Time</text><text class="t e" x="398" y="765">Type</text><text class="t e" x="465" y="765">Size</text><text class="t e" x="550" y="765">Symbol</text><text class="t e" x="635" y="765">Price</text><text class="t e" x="720" y="765">S / L</text><text class="t e" x="805" y="765">T / P</text><text class="t e" x="992" y="765">Time</text><text class="t e" x="1077" y="765">Price</text><text class="t e" x="1162" y="765">Swap</text><text class="t e" x="1259" y="765">Profit</text>

<!-- table rows -->
<rect x="22" y="772" width="1243" height="19" fill="#fff"/>
<rect x="22" y="791" width="1243" height="1" fill="#d0d0d0"/>
<rect x="22" y="792" width="1243" height="19" fill="#e8e8e8"/>
<rect x="22" y="811" width="1243" height="1" fill="#d0d0d0"/>
<rect x="22" y="812" width="1243" height="19" fill="#fff"/>
<rect x="727" y="792" width="83" height="18" fill="#60f060"/>
<rect x="727" y="812" width="83" height="19" fill="#60f060"/>
<g fill="#cfcfcf">
<rect x="130" y="772" width="1" height="59"/><rect x="318" y="772" width="1" height="59"/><rect x="403" y="772" width="1" height="59"/><rect x="470" y="772" width="1" height="59"/><rect x="555" y="772" width="1" height="59"/><rect x="640" y="772" width="1" height="59"/><rect x="725" y="772" width="1" height="59"/><rect x="810" y="772" width="1" height="59"/><rect x="997" y="772" width="1" height="59"/><rect x="1082" y="772" width="1" height="59"/><rect x="1167" y="772" width="1" height="59"/>
</g>
<rect x="22" y="831" width="1243" height="6" fill="#c8c8c8"/>
<rect x="1265" y="831" width="14" height="6" fill="#ece9d8"/>
<rect x="22" y="837" width="115" height="1" fill="#222"/>
<rect x="232" y="837" width="1047" height="1" fill="#222"/>
<rect x="137" y="837" width="95" height="2" fill="#fff"/>
<!-- row icons -->
<rect x="25.500" y="774.500" width="11" height="12" fill="#fff" stroke="#888"/>
<path d="M31 776l3.500 4h-2v4h-3v-4h-2z" fill="#1a9a2a"/>
<path d="M26 794.500h7l3 3v10h-10z" fill="#fff" stroke="#777"/>
<circle cx="36" cy="807" r="3.500" fill="#e84a1a"/>
<path d="M26 814.500h7l3 3v10h-10z" fill="#fff" stroke="#777"/>
<circle cx="36" cy="827" r="3.500" fill="#2a88d8"/>
<g class="t">
<text class="t" x="44" y="785">142956990</text><text class="t e" x="315" y="785">2015.11.18 01:36:16</text><text class="t e" x="400" y="785">balance</text><text class="t e" x="1164" y="785">Deposit</text><text class="t e" x="1261" y="785">50 000.00</text>
<text class="t" x="44" y="805">142957028</text><text class="t e" x="315" y="805">2015.11.18 01:37:12</text><text class="t e" x="400" y="805">sell</text><text class="t e" x="467" y="805">1.00</text><text class="t e" x="552" y="805">gold</text><text class="t e" x="637" y="805">1070.20</text><text class="t e" x="722" y="805">0.00</text><text class="t e" x="807" y="805">1065.00</text><text class="t e" x="994" y="805">2015.11.18 05:12:03</text><text class="t e" x="1079" y="805">1065.00</text><text class="t e" x="1164" y="805">0.00</text><text class="t e" x="1261" y="805">520.00</text>
<text class="t" x="44" y="825">143014773</text><text class="t e" x="315" y="825">2015.11.18 16:06:35</text><text class="t e" x="400" y="825">buy</text><text class="t e" x="467" y="825">1.00</text><text class="t e" x="552" y="825">gold</text><text class="t e" x="637" y="825">1069.55</text><text class="t e" x="722" y="825">0.00</text><text class="t e" x="807" y="825">1077.00</text><text class="t e" x="994" y="825">2015.11.19 03:35:32</text><text class="t e" x="1079" y="825">1077.00</text><text class="t e" x="1164" y="825">-5.88</text><text class="t e" x="1261" y="825">745.00</text>
</g>
<!-- scrollbar -->
<rect x="1265" y="750" width="14" height="89" fill="#eef2fd"/>
<rect x="1267" y="753" width="12" height="13" fill="#c5d5f8" stroke="#a9bde8" stroke-width=".5"/>
<path d="M1270 761l3-3 3 3" stroke="#2a3a6a" stroke-width="2" fill="none"/>
<rect x="1267" y="769" width="12" height="37" fill="#c5d5f8" stroke="#a0b6ea" stroke-width=".5"/>
<path d="M1270 785h6M1270 787h6M1270 789h6" stroke="#eef3ff"/>
<rect x="1267" y="822" width="12" height="13" fill="#c5d5f8" stroke="#a9bde8" stroke-width=".5"/>
<path d="M1270 827l3 3 3-3" stroke="#2a3a6a" stroke-width="2" fill="none"/>
</svg>
</body></html>
